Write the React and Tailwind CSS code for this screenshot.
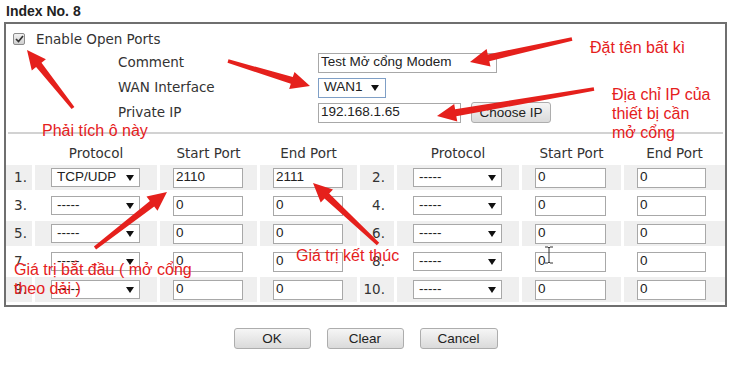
import React from "react";

const sans = "font-['Liberation_Sans',Arial,sans-serif]";
const verdana = "font-['DejaVu_Sans',Verdana,sans-serif]";

const rows = [
  ["1.", "TCP/UDP", "2110", "2111", "2.", "-----", "0", "0"],
  ["3.", "-----", "0", "0", "4.", "-----", "0", "0"],
  ["5.", "-----", "0", "0", "6.", "-----", "0", "0"],
  ["7.", "-----", "0", "0", "8.", "-----", "0", "0"],
  ["9.", "-----", "0", "0", "10.", "-----", "0", "0"],
];

const arrows = [
  [73, 108, 27, 50],
  [228, 61, 310, 86],
  [572, 39, 470, 62],
  [594, 89, 437, 116],
  [95, 248, 167, 192],
  [378, 244, 313, 183],
];

// tapered red arrow, thin tail -> thick head
const arrowPoints = (x1, y1, x2, y2) => {
  const dx = x2 - x1;
  const dy = y2 - y1;
  const len = Math.hypot(dx, dy);
  const ux = dx / len;
  const uy = dy / len;
  const px = -uy;
  const py = ux;
  const hl = 19, hw = 9, w1 = 1.8, w2 = 3.5;
  const bx = x2 - ux * hl;
  const by = y2 - uy * hl;
  const p = [
    [x1 + px * w1, y1 + py * w1],
    [bx + px * w2, by + py * w2],
    [bx + px * hw, by + py * hw],
    [x2, y2],
    [bx - px * hw, by - py * hw],
    [bx - px * w2, by - py * w2],
    [x1 - px * w1, y1 - py * w1],
  ];
  return p.map((q) => q.map((v) => v.toFixed(1)).join(",")).join(" ");
};

const Caret = () => (
  <svg width="8" height="6" viewBox="0 0 8 6">
    <path d="M0 0 H8 L4 6 Z" fill="#111" />
  </svg>
);

const Select = ({ value, width }) => (
  <div
    className={`flex items-center justify-between h-[19px] bg-white border border-[#a8a8a8] pl-[5px] pr-[5px] text-[13.5px] text-[#222] ${sans} ${width}`}
  >
    <span>{value}</span>
    <Caret />
  </div>
);

const Field = ({ value, width }) => (
  <div
    className={`flex items-center h-[20px] bg-white border border-[#a8a8a8] pl-[2px] text-[13.5px] text-[#222] ${sans} ${width}`}
  >
    {value}
  </div>
);

const Btn = ({ label, width }) => (
  <button
    className={`h-[21px] ${width} rounded-[3px] border border-[#adadad] bg-linear-to-b from-[#f6f6f6] to-[#dadada] text-[13.5px] text-[#222] ${sans} leading-none`}
  >
    {label}
  </button>
);

const App = () => {
  return (
    <div className="relative w-[729px] h-[367px] bg-white overflow-hidden">

      {/* title */}
      <div className={`h-[22px] pl-[6px] pt-[2px] leading-[18px] text-[14px] font-bold text-[#222] ${sans}`}>
        Index No. 8
      </div>

      {/* main box */}
      <div className="ml-[4px] w-[723px] border-2 border-[#6f6f6f]">

        <div className={`mt-[7px] h-[16px] flex items-center pl-[7px] text-[13.5px] text-[#333] ${verdana}`}>
          <div className="w-[12px] h-[12px] rounded-[2px] border border-[#8c8c8c] bg-linear-to-b from-[#f2f2f2] to-[#cfcfcf] flex items-center justify-center">
            <svg width="9" height="8" viewBox="0 0 9 8">
              <path d="M1 4 L3.5 6.5 L8 1" stroke="#333" strokeWidth="1.7" fill="none" />
            </svg>
          </div>
          <span className="ml-[11px]">Enable Open Ports</span>
        </div>

        <div className={`mt-[3px] text-[13.5px] text-[#333] ${verdana}`}>
          <div className="h-[25px] flex items-center">
            <div className="w-[312px] pl-[112px]">Comment</div>
            <Field value="Test Mở cổng Modem" width="w-[179px]" />
          </div>
          <div className="h-[25px] flex items-center">
            <div className="w-[312px] pl-[112px]">WAN Interface</div>
            <div className="flex items-center justify-between w-[68px] h-[20px] bg-white border border-[#7f9fc6] pl-[5px] pr-[6px]">
              <span className={`text-[13.5px] text-[#222] ${sans}`}>WAN1</span>
              <Caret />
            </div>
          </div>
          <div className="h-[25px] flex items-center">
            <div className="w-[312px] pl-[112px]">Private IP</div>
            <Field value="192.168.1.65" width="w-[143px]" />
            <div className="ml-[10px]">
              <Btn label="Choose IP" width="w-[80px]" />
            </div>
          </div>
        </div>

        <div className="mt-[7px] mx-[2px] h-[2px] bg-[#d2d2d2]" />

        {/* ports table */}
        <div
          className={`grid grid-cols-[26px_122px_97px_97px_34px_122px_99px_101px] grid-rows-[28px_repeat(5,25px)] gap-[3px] pb-[3px] text-[13.5px] text-[#333] ${verdana}`}
        >
          <div />
          <div className="pt-[11px] leading-[16px] text-center">Protocol</div>
          <div className="pt-[11px] leading-[16px] text-center">Start Port</div>
          <div className="pt-[11px] leading-[16px] text-center">End Port</div>
          <div />
          <div className="pt-[11px] leading-[16px] text-center">Protocol</div>
          <div className="pt-[11px] leading-[16px] text-center">Start Port</div>
          <div className="pt-[11px] leading-[16px] text-center">End Port</div>

          {rows.map((r, i) => {
            const bg = i % 2 === 0 ? "bg-[#efefef]" : "bg-white";
            return (
              <React.Fragment key={i}>
                <div className={`${bg} flex items-center justify-end pr-[5px]`}>{r[0]}</div>
                <div className={`${bg} flex items-center pl-[16px]`}>
                  <Select value={r[1]} width="w-[89px]" />
                </div>
                <div className={`${bg} flex items-center pl-[13px]`}>
                  <Field value={r[2]} width="w-[70px]" />
                </div>
                <div className={`${bg} flex items-center pl-[13px]`}>
                  <Field value={r[3]} width="w-[70px]" />
                </div>
                <div className={`${bg} flex items-center justify-end pr-[9px]`}>{r[4]}</div>
                <div className={`${bg} flex items-center pl-[16px]`}>
                  <Select value={r[5]} width="w-[89px]" />
                </div>
                <div className={`${bg} flex items-center pl-[13px]`}>
                  <Field value={r[6]} width="w-[71px]" />
                </div>
                <div className={`${bg} flex items-center pl-[13px]`}>
                  <Field value={r[7]} width="w-[69px]" />
                </div>
              </React.Fragment>
            );
          })}
        </div>
      </div>

      {/* buttons */}
      <div className="mt-[21px] flex justify-center gap-[16px] pl-[2px]">
        <Btn label="OK" width="w-[77px]" />
        <Btn label="Clear" width="w-[77px]" />
        <Btn label="Cancel" width="w-[78px]" />
      </div>

      {/* annotations */}
      <svg className="absolute top-0 left-0 pointer-events-none" width="729" height="367">
        {arrows.map((a, i) => (
          <polygon key={i} points={arrowPoints(...a)} fill="#e5201c" />
        ))}
        <path
          d="M545 247 H548 L549 248 L550 247 H553 M549 248 V262 M545 263 H548 L549 262 L550 263 H553"
          stroke="#333"
          strokeWidth="1"
          fill="none"
        />
      </svg>

      <div className={`absolute left-[590px] top-[38px] text-[16px] leading-[19px] text-[#e5201c] ${sans}`}>
        Đặt tên bất kì
      </div>
      <div className={`absolute left-[612px] top-[85px] text-[16px] leading-[19px] text-[#e5201c] ${sans}`}>
        Địa chỉ IP của
        <br />
        thiết bị cần
        <br />
        mở cổng
      </div>
      <div className={`absolute left-[42px] top-[121px] text-[16px] leading-[19px] text-[#e5201c] ${sans}`}>
        Phải tích ô này
      </div>
      <div className={`absolute left-[296px] top-[246px] text-[16px] leading-[19px] text-[#e5201c] ${sans}`}>
        Giá trị kết thúc
      </div>
      <div className={`absolute left-[14px] top-[260px] text-[16px] leading-[19px] text-[#e5201c] ${sans}`}>
        Giá trị bắt đầu ( mở cổng
        <br />
        theo dải )
      </div>
    </div>
  );
};

export default App;
